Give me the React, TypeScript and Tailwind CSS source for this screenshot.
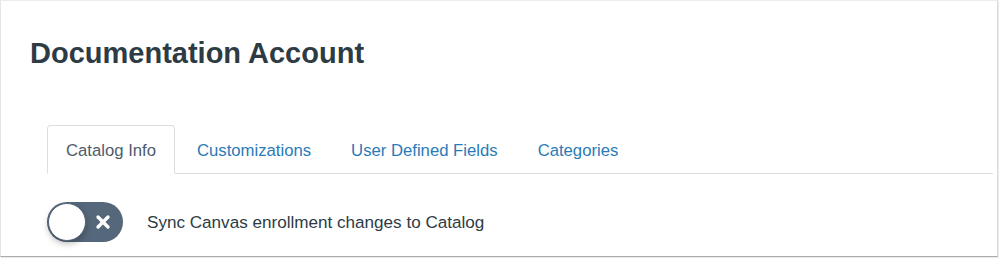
import { X } from "lucide-react";

const tabs = ["Catalog Info", "Customizations", "User Defined Fields", "Categories"];

export default function App() {
  return (
    <div className="h-[259px] w-[999px] bg-white font-['Liberation_Sans',Arial,sans-serif]">
      <div className="h-[257px] w-[998px] border border-t-[#ececec] border-l-[#e6e6e6] border-r-[#dcdcdc] border-b-[#ababab] bg-white shadow-[1px_1px_1px_rgba(0,0,0,0.08)]">
        <div className="pl-[29px] pt-[34px]">
          <h1 className="text-[29px] font-bold leading-[36px] text-[#2d3b45]">Documentation Account</h1>
        </div>

        <div className="ml-[46px] mr-[4px] mt-[54px] flex border-b border-[#dedede]">
          {tabs.map((t, i) =>
            i === 0 ? (
              <div
                key={t}
                className="-mb-px mr-[2px] flex h-[49px] items-center rounded-t-[4px] border border-b-white border-[#dedede] bg-white pl-[18px] pr-[18px] pt-[3px] text-[16.7px] text-[#4e5c69]"
              >
                {t}
              </div>
            ) : (
              <div key={t} className="flex h-[48px] items-center px-[20px] pt-[3px] text-[16.7px] text-[#2a7ab8]">
                {t}
              </div>
            )
          )}
        </div>

        <div className="ml-[46px] mt-[28px] flex items-center gap-[24px]">
          <div className="relative h-[40px] w-[76px] rounded-full bg-[#55677a]">
            <div className="absolute left-[1px] top-[1px] h-[38px] w-[38px] rounded-full border border-[#55677a] bg-white shadow-[0_3px_6px_rgba(0,0,0,0.25)]" />
            <X className="absolute left-[46px] top-[10px] h-[20px] w-[20px] text-white" strokeWidth={4} />
          </div>
          <span className="pt-[1px] text-[17.1px] text-[#2d3b45]">Sync Canvas enrollment changes to Catalog</span>
        </div>
      </div>
    </div>
  );
}
